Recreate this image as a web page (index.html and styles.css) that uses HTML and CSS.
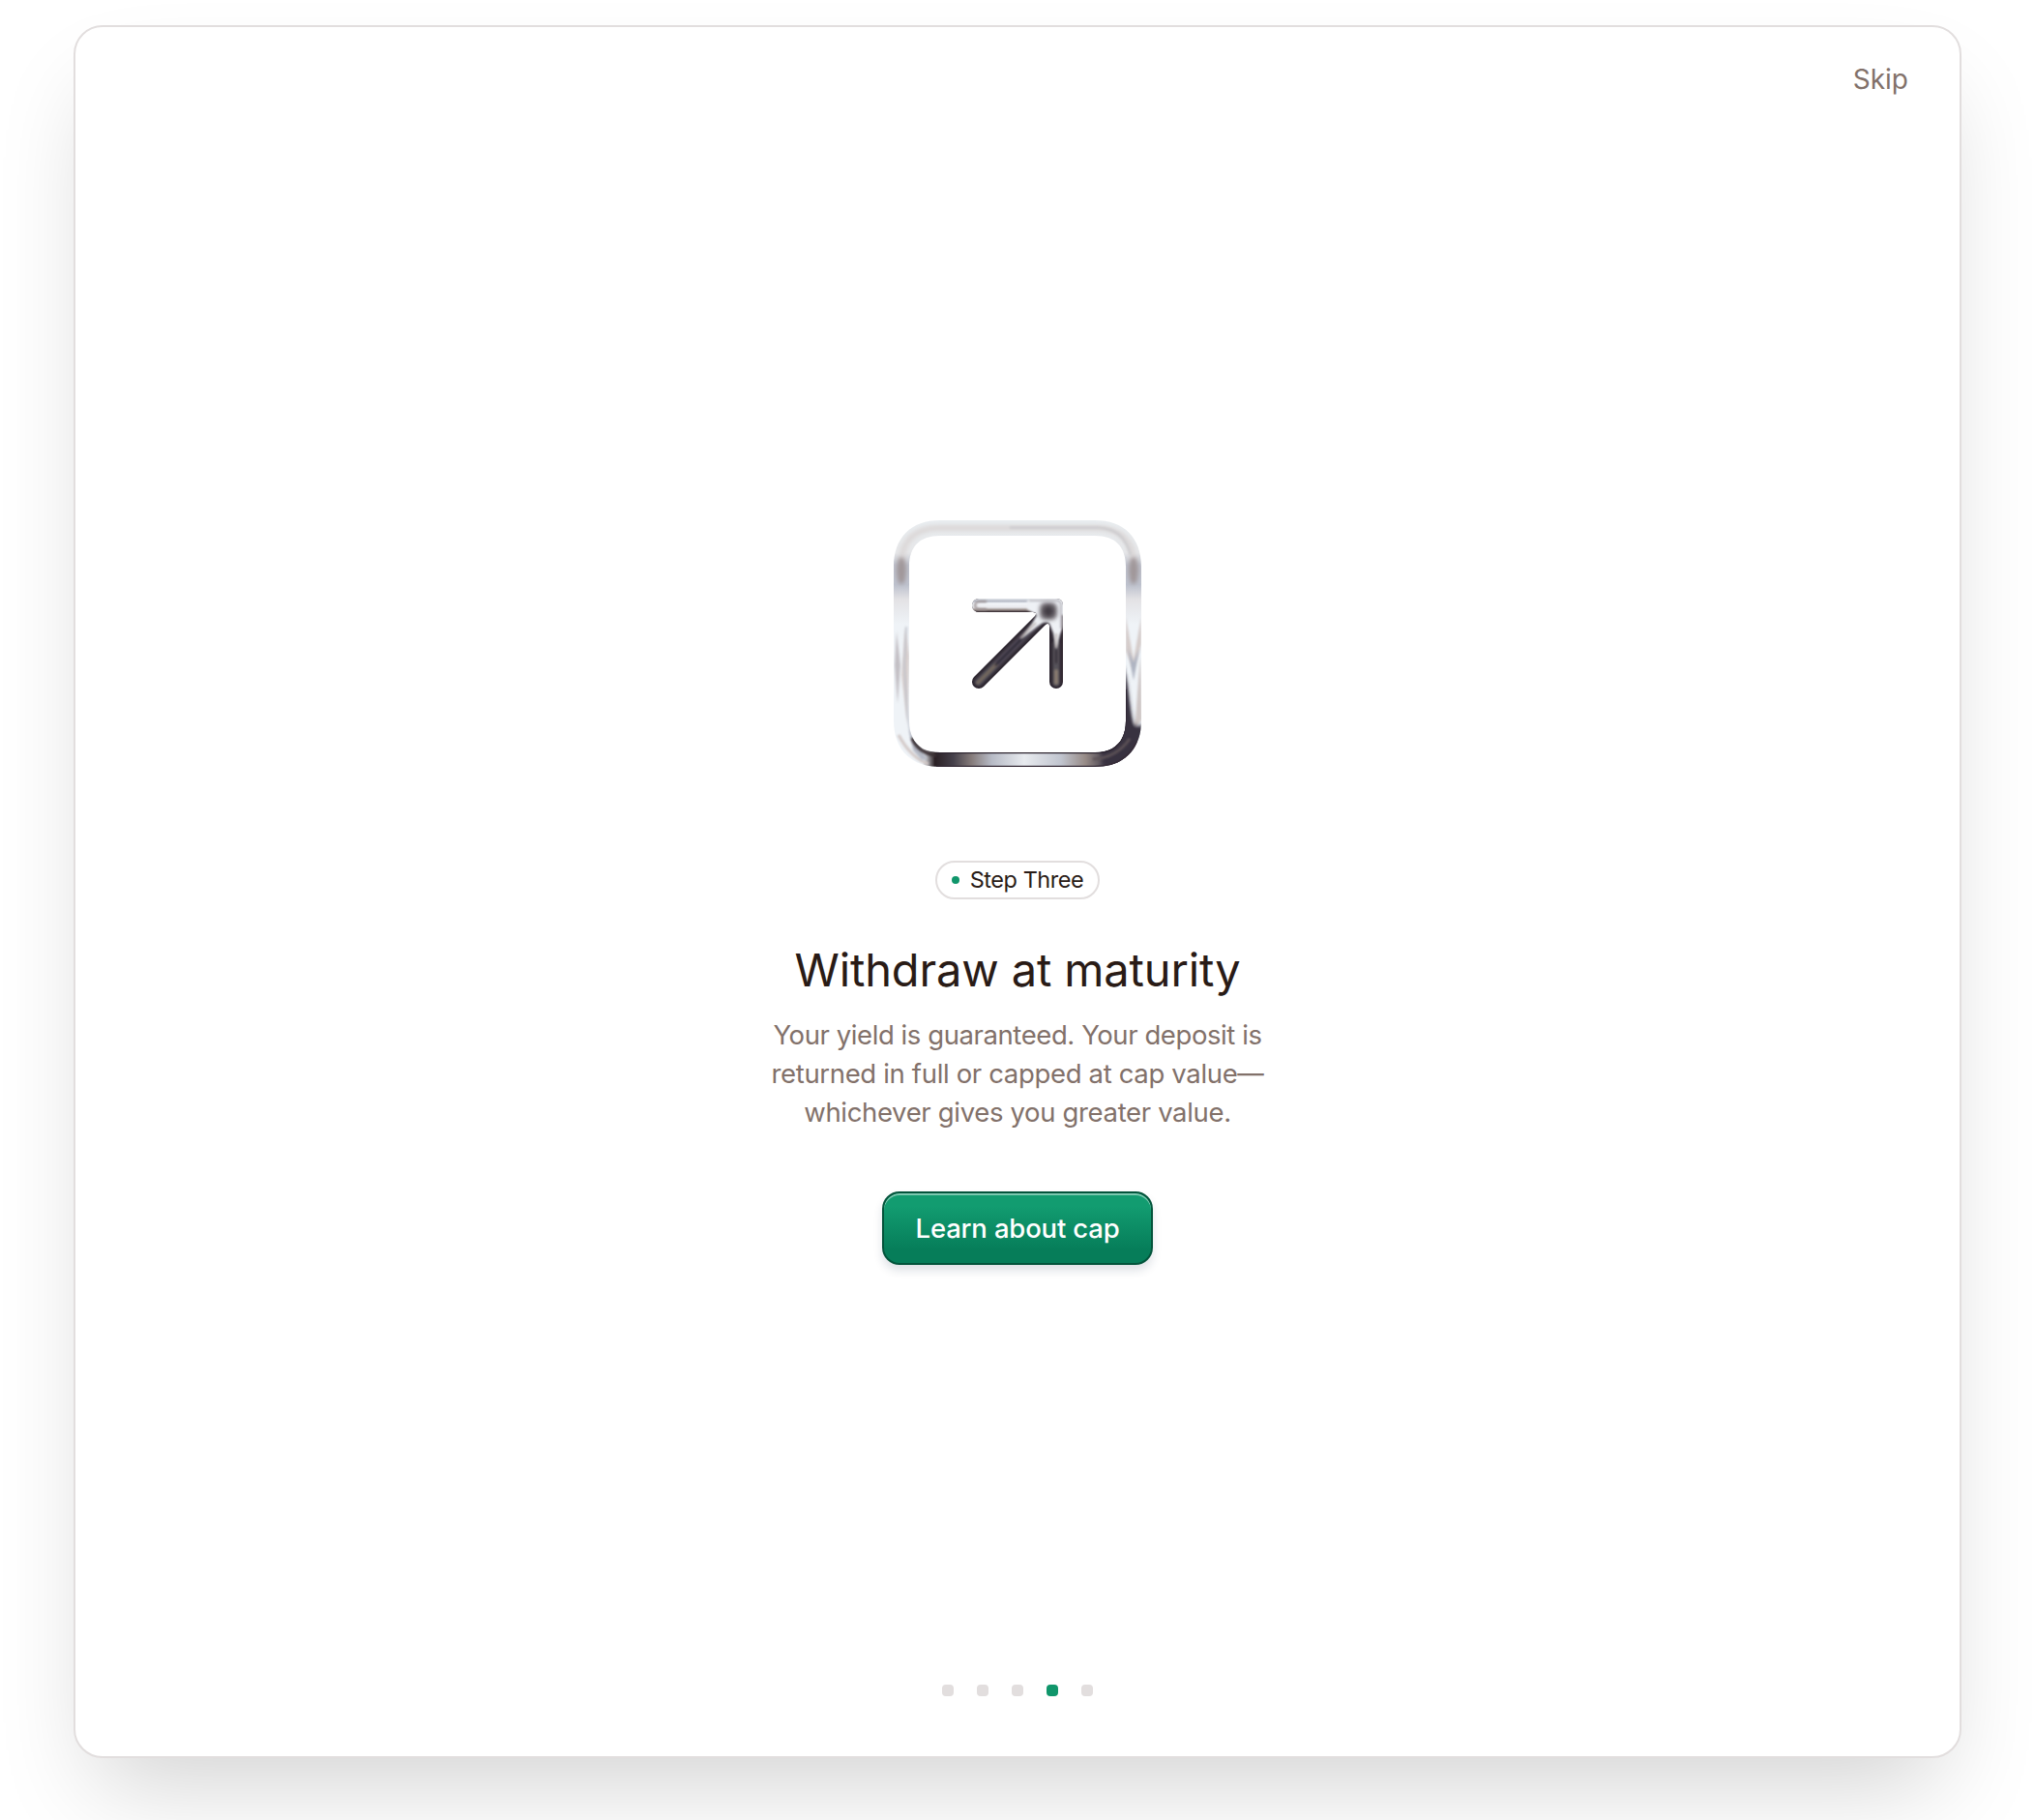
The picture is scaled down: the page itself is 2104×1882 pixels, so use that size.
FILE: index.html
```html
<!DOCTYPE html>
<html lang="en">
<head>
    <meta charset="UTF-8">
    <meta name="viewport" content="width=device-width, initial-scale=1.0">
    <title>Withdraw at maturity</title>
    <link rel="stylesheet" href="styles.css">
</head>
<body>
    <div class="card">
        <div class="card-header">
            <button type="button" class="skip-button">Skip</button>
        </div>
        <div class="content">
            <svg class="step-icon" viewBox="0 0 256 256" fill="none" aria-hidden="true">
                <defs>
                    <clipPath id="ringClip">
                        <path clip-rule="evenodd" d="M48 0H208C238 0 256 18 256 48V207C256 237 238 255 208 255H48C18 255 0 237 0 207V48C0 18 18 0 48 0ZM48 16C27 16 16 27 16 48V207C16 228 27 240 48 240H208C229 240 240 228 240 207V48C240 27 229 16 208 16Z"/>
                    </clipPath>
                    <clipPath id="arrowClip">
                        <path d="M88 81H168Q175 81 175 88V167A7 7 0 0 1 161 167V109Q160 105 156 109L93 172A7 7 0 0 1 83 162L146 99Q149 95 144 95H88A7 7 0 0 1 88 81Z"/>
                    </clipPath>
                    <linearGradient id="ringBase" x1="0" y1="0" x2="0" y2="1">
                        <stop offset="0" stop-color="#e9edf0"/>
                        <stop offset="0.13" stop-color="#e6e7e9"/>
                        <stop offset="0.18" stop-color="#bfc2cd"/>
                        <stop offset="0.26" stop-color="#bdc1cd"/>
                        <stop offset="0.32" stop-color="#e3e2e5"/>
                        <stop offset="0.42" stop-color="#eff3f7"/>
                        <stop offset="1" stop-color="#eff3f7"/>
                    </linearGradient>
                    <linearGradient id="ringBottom" x1="30" y1="0" x2="240" y2="0" gradientUnits="userSpaceOnUse">
                        <stop offset="0" stop-color="#2a2024" stop-opacity="0"/>
                        <stop offset="0.06" stop-color="#2a2024"/>
                        <stop offset="0.15" stop-color="#45404a"/>
                        <stop offset="0.24" stop-color="#857b7a"/>
                        <stop offset="0.34" stop-color="#b7bbc6"/>
                        <stop offset="0.5" stop-color="#e8ebef"/>
                        <stop offset="0.68" stop-color="#c1c5cf"/>
                        <stop offset="0.8" stop-color="#978b87"/>
                        <stop offset="0.9" stop-color="#4b4651"/>
                        <stop offset="1" stop-color="#38333f"/>
                    </linearGradient>
                    <linearGradient id="arrowTop" x1="0" y1="81" x2="0" y2="95" gradientUnits="userSpaceOnUse">
                        <stop offset="0" stop-color="#e3e7ec"/>
                        <stop offset="0.2" stop-color="#b5b9c5"/>
                        <stop offset="0.35" stop-color="#f3f6fa"/>
                        <stop offset="0.65" stop-color="#e9e9ed"/>
                        <stop offset="0.82" stop-color="#9b908d"/>
                        <stop offset="1" stop-color="#2b2028"/>
                    </linearGradient>
                    <filter id="soft" filterUnits="userSpaceOnUse" x="-10" y="-10" width="276" height="276"><feGaussianBlur stdDeviation="1"/></filter>
                    <filter id="softer" filterUnits="userSpaceOnUse" x="-10" y="-10" width="276" height="276"><feGaussianBlur stdDeviation="2"/></filter>
                </defs>
                <!-- chrome frame -->
                <g clip-path="url(#ringClip)">
                    <rect width="256" height="256" fill="url(#ringBase)"/>
                    <path d="M8 44C8 22 22 8 46 8H210C234 8 248 22 248 44" stroke="#dcd8d8" stroke-width="6" filter="url(#softer)"/>
                    <path d="M120 7.500H212C230 9 240 17 245 36" stroke="#cdcccf" stroke-width="2.500" filter="url(#soft)"/>
                    <ellipse cx="8" cy="52" rx="5" ry="14" fill="#a0979a" filter="url(#softer)"/>
                    <ellipse cx="248" cy="52" rx="5" ry="14" fill="#a0979a" filter="url(#softer)"/>
                    <path d="M3 115L7 150L4 190L1 150Z" fill="#c3bfc4" filter="url(#soft)"/>
                    <path d="M12 110L8 160L14 210L16 140Z" fill="#d8cfcd" filter="url(#soft)"/>
                    <path d="M13 110L11 150L14 200L18 225" stroke="#bdc1cb" stroke-width="1.500" filter="url(#soft)"/>
                    <path d="M240 100L248 144L256 100V128L248 156L240 135Z" fill="#d5ccca" filter="url(#soft)"/>
                    <path d="M242 132L248 147L254 132L248 166Z" fill="#aeb4c2" filter="url(#soft)"/>
                    <path d="M255 140L250 205L247 218L257 206Z" fill="#cfc7c6" filter="url(#soft)"/>
                    <path d="M24 237H240V258H24Z" fill="url(#ringBottom)"/>
                    <path d="M239 158C243 180 244 198 248 211C252 217 260 206 260 216V260H217L214 238L232 225L239 205Z" fill="#38333f" filter="url(#softer)"/>
                    <path d="M239 150C243 178 243 198 247 213C252 219 256 210 254 222C248 238 238 248 224 256L220 238L232 225L239 205Z" fill="#38333f" filter="url(#soft)"/>
                    <path d="M206 247C222 246 235 239 244 226" stroke="#5d5257" stroke-width="3" filter="url(#soft)"/>
                    <path d="M5 222C13 237 22 247 36 252" stroke="#d2c8c6" stroke-width="3" filter="url(#soft)"/>
                    <path d="M16 216L20 238L29 248L35 247L24 230Z" fill="#b5b9c5" filter="url(#soft)"/>
                    <path d="M19 225C23 235 30 241 44 243" stroke="#3b3136" stroke-width="3.500" filter="url(#soft)"/>
                    <path d="M44 240.500H210C229 240 239 228 240 207V175" stroke="#2d2530" stroke-width="1.600"/>
                    <path d="M44 254.500H208C230 254 244 245 251 229" stroke="#372c38" stroke-width="1.500"/>
                </g>
                <!-- arrow -->
                <g clip-path="url(#arrowClip)">
                    <rect x="78" y="78" width="100" height="100" fill="#2e2731"/>
                    <path d="M88 167L148 107" stroke="#4f4b54" stroke-width="8" stroke-linecap="round" filter="url(#soft)"/>
                    <path d="M87 168L106 149" stroke="#75695f" stroke-width="3.500" stroke-linecap="round" filter="url(#soft)"/>
                    <path d="M105 150L150 105" stroke="#332d38" stroke-width="2.500" filter="url(#soft)"/>
                    <path d="M168 128V168" stroke="#57525a" stroke-width="7" stroke-linecap="round" filter="url(#soft)"/>
                    <path d="M168 156V168" stroke="#887a6e" stroke-width="4" stroke-linecap="round" filter="url(#soft)"/>
                    <path d="M168 116V148" stroke="#332d38" stroke-width="2" filter="url(#soft)"/>
                    <rect x="78" y="80" width="70" height="16" fill="url(#arrowTop)"/>
                    <path d="M96 84H89C82.500 84 82.500 92 89 92H96" stroke="#9a9091" stroke-width="2" filter="url(#soft)"/>
                    <path d="M138 83L144 78H178V105L172 118L168 134L165 117L161 107C155 102 149 111 131 123L143 107L148 98L138 92Z" fill="#eef1f5" filter="url(#soft)"/>
                    <path d="M131 122L147 106M168 132V117" stroke="#b3a8a5" stroke-width="1.500" filter="url(#soft)"/>
                    <rect x="151" y="85" width="18" height="18" rx="6" fill="#756e75" filter="url(#softer)"/>
                    <circle cx="160" cy="94" r="5.500" fill="#3f3b43" filter="url(#softer)"/>
                    <path d="M140 83H168Q173 83 173 88V112" stroke="#aaa8b0" stroke-width="1.500" filter="url(#soft)"/>
                    <path d="M175 98V168" stroke="#3a3037" stroke-width="1.500" filter="url(#soft)"/>
                </g>
            </svg>
            <div class="badge">
                <span class="badge-dot"></span>
                <span class="badge-text">Step Three</span>
            </div>
            <h1>Withdraw at maturity</h1>
            <p class="description">
                <span class="line-one">Your yield is guaranteed. Your deposit is</span><br>
                returned in full or capped at cap value—<br>
                whichever gives you greater value.
            </p>
            <button type="button" class="primary-button">Learn about cap</button>
        </div>
        <div class="pagination">
            <span class="dot"></span>
            <span class="dot"></span>
            <span class="dot"></span>
            <span class="dot active"></span>
            <span class="dot"></span>
        </div>
    </div>
</body>
</html>
```
FILE: styles.css
```css
* {
    box-sizing: border-box;
}
body {
    font-family: Inter, "Liberation Sans", sans-serif;
    background-color: #fff;
    height: 1882px;
    margin: 0;
    padding: 26px 76px 0;
    overflow: hidden;
}
button {
    font-family: inherit;
    cursor: pointer;
}
.card {
    display: flex;
    flex-direction: column;
    height: 1792px;
    background-color: #fff;
    border: 2px solid #e2dede;
    border-radius: 30px;
    box-shadow: 0 50px 100px -24px rgba(0, 0, 0, 0.18);
}
.card-header {
    display: flex;
    justify-content: flex-end;
    padding: 34px 53px 0 0;
}
.skip-button {
    padding: 0;
    border: none;
    background: none;
    color: #82716a;
    font-size: 28px;
    line-height: 40px;
}
.content {
    display: flex;
    flex-direction: column;
    align-items: center;
    flex: 1;
    padding-top: 436px;
}
.step-icon {
    width: 256px;
    height: 256px;
}
.badge {
    display: flex;
    align-items: center;
    justify-content: center;
    width: 170px;
    height: 40px;
    gap: 11px;
    margin-top: 96px;
    border: 2px solid #e2dede;
    border-radius: 20px;
}
.badge-dot {
    width: 8px;
    height: 8px;
    border-radius: 50%;
    background-color: #10966b;
}
.badge-text {
    color: #291b16;
    font-size: 23.5px;
    letter-spacing: -0.45px;
    line-height: 32px;
}
h1 {
    margin: 45px 0 0;
    color: #291b16;
    font-size: 47px;
    font-weight: 400;
    letter-spacing: -0.13px;
    line-height: 56px;
}
.description {
    margin: 19px 0 0;
    color: #82716a;
    font-size: 27.5px;
    letter-spacing: -0.34px;
    line-height: 40px;
    text-align: center;
    white-space: nowrap;
}
.line-one {
    letter-spacing: -0.42px;
}
.primary-button {
    width: 280px;
    height: 76px;
    margin-top: 62px;
    padding: 0;
    border: 2px solid #03543b;
    border-radius: 18px;
    background: linear-gradient(#129c70 20%, #067d59 80%);
    background-origin: border-box;
    box-shadow: inset 0 2px 0 rgba(255, 255, 255, 0.45), 0 6px 10px rgba(30, 50, 80, 0.14);
    color: #fff;
    font-size: 27.5px;
    font-weight: 500;
    letter-spacing: -0.18px;
}
.pagination {
    display: flex;
    justify-content: center;
    gap: 24px;
    padding-bottom: 62px;
}
.dot {
    width: 12px;
    height: 12px;
    border-radius: 4px;
    background-color: #e2dede;
}
.dot.active {
    background-color: #10966b;
}
```
